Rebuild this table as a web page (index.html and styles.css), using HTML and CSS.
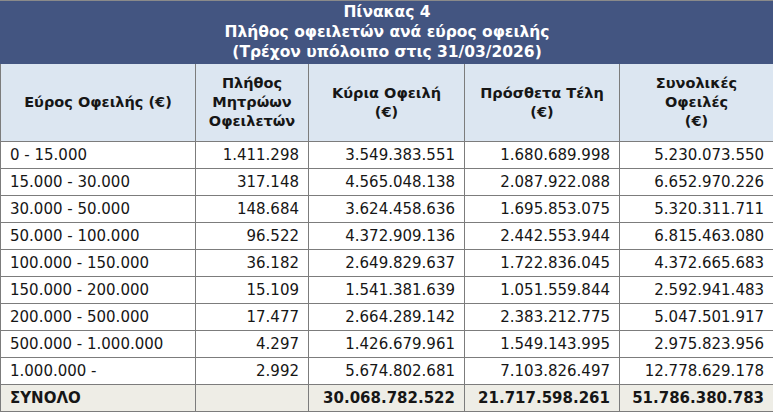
FILE: index.html
```html
<!DOCTYPE html>
<html lang="el">
<head>
<meta charset="utf-8">
<title>Πίνακας 4</title>
<link rel="stylesheet" href="styles.css">
</head>
<body>
<table class="tbl">
  <colgroup>
    <col class="c1"><col class="c2"><col class="c3"><col class="c4"><col class="c5">
  </colgroup>
  <thead>
    <tr class="title-row">
      <th colspan="5">Πίνακας 4<br>Πλήθος οφειλετών ανά εύρος οφειλής<br>(Τρέχον υπόλοιπο στις 31/03/2026)</th>
    </tr>
    <tr class="head-row">
      <th>Εύρος Οφειλής (€)</th>
      <th>Πλήθος<br>Μητρώων<br>Οφειλετών</th>
      <th>Κύρια Οφειλή<br>(€)</th>
      <th>Πρόσθετα Τέλη<br>(€)</th>
      <th>Συνολικές<br>Οφειλές<br>(€)</th>
    </tr>
  </thead>
  <tbody>
    <tr><td>0 - 15.000</td><td>1.411.298</td><td>3.549.383.551</td><td>1.680.689.998</td><td>5.230.073.550</td></tr>
    <tr><td>15.000 - 30.000</td><td>317.148</td><td>4.565.048.138</td><td>2.087.922.088</td><td>6.652.970.226</td></tr>
    <tr><td>30.000 - 50.000</td><td>148.684</td><td>3.624.458.636</td><td>1.695.853.075</td><td>5.320.311.711</td></tr>
    <tr><td>50.000 - 100.000</td><td>96.522</td><td>4.372.909.136</td><td>2.442.553.944</td><td>6.815.463.080</td></tr>
    <tr><td>100.000 - 150.000</td><td>36.182</td><td>2.649.829.637</td><td>1.722.836.045</td><td>4.372.665.683</td></tr>
    <tr><td>150.000 - 200.000</td><td>15.109</td><td>1.541.381.639</td><td>1.051.559.844</td><td>2.592.941.483</td></tr>
    <tr><td>200.000 - 500.000</td><td>17.477</td><td>2.664.289.142</td><td>2.383.212.775</td><td>5.047.501.917</td></tr>
    <tr><td>500.000 - 1.000.000</td><td>4.297</td><td>1.426.679.961</td><td>1.549.143.995</td><td>2.975.823.956</td></tr>
    <tr><td>1.000.000 -</td><td>2.992</td><td>5.674.802.681</td><td>7.103.826.497</td><td>12.778.629.178</td></tr>
    <tr class="total-row"><td>ΣΥΝΟΛΟ</td><td></td><td>30.068.782.522</td><td>21.717.598.261</td><td>51.786.380.783</td></tr>
  </tbody>
</table>
</body>
</html>
```

FILE: styles.css
```css
html, body {
  margin: 0;
  padding: 0;
  background: #ffffff;
}

.tbl {
  width: 773px;
  table-layout: fixed;
  border-collapse: collapse;
  font-family: "DejaVu Sans", Verdana, sans-serif;
  font-size: 15px;
  color: #161616;
}

.c1 { width: 195px; }
.c2 { width: 113px; }
.c3 { width: 156px; }
.c4 { width: 155px; }
.c5 { width: 154px; }

.tbl th,
.tbl td {
  border: 1px solid #7c7c7c;
  padding: 0 9px;
}

.title-row th {
  background: #435581;
  color: #ffffff;
  font-weight: bold;
  font-size: 15.5px;
  line-height: 20px;
  height: 62px;
  padding: 0;
  text-align: center;
  vertical-align: middle;
  border-color: #435581;
  border-top: 1px solid #8a8a8a;
}

.head-row th {
  background: #dce6f1;
  font-weight: bold;
  font-size: 14.5px;
  line-height: 19px;
  height: 77px;
  text-align: center;
  vertical-align: middle;
  padding: 0 4px;
}

.tbl td {
  height: 26px;
  line-height: 18px;
  text-align: right;
  vertical-align: middle;
}

.tbl td:first-child {
  text-align: left;
}

.total-row td {
  background: #eeede6;
  font-weight: bold;
}
```
